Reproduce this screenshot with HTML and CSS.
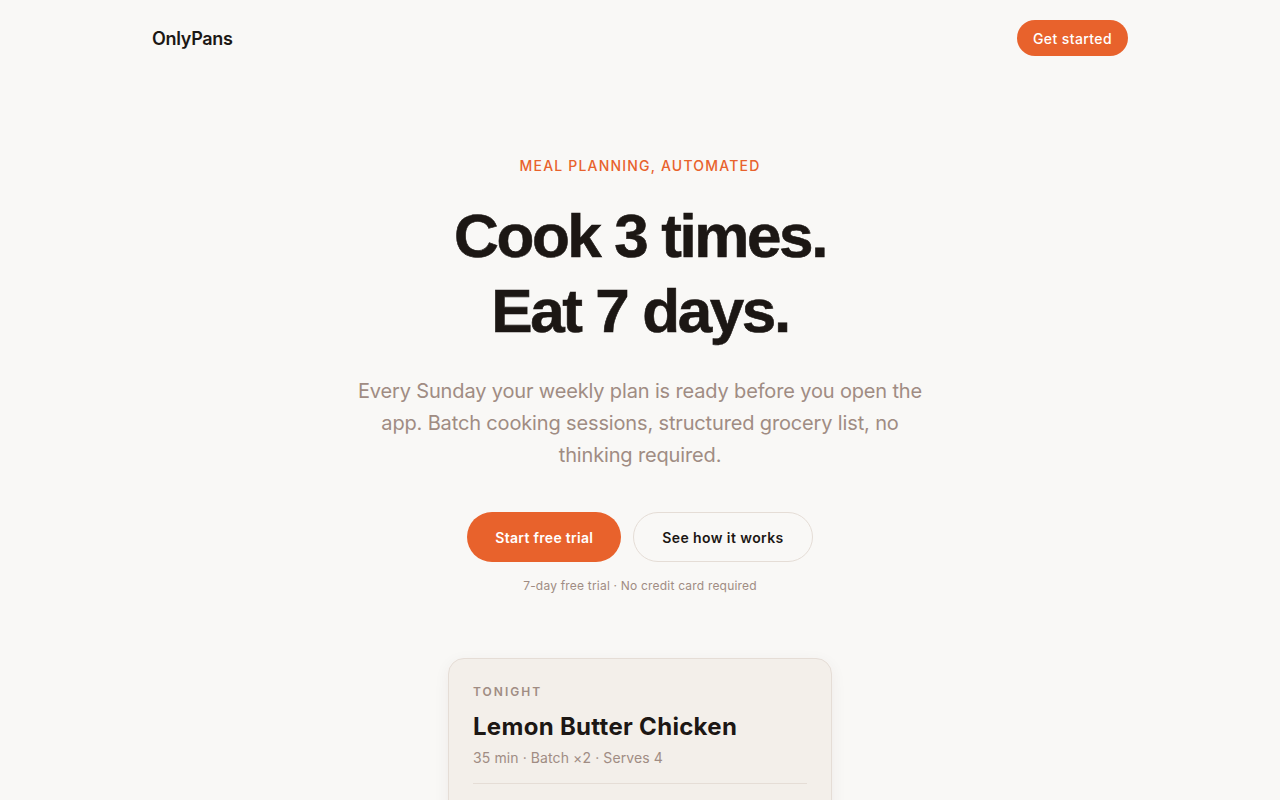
FILE: index.html
```html
<!DOCTYPE html>
<html lang="en">
<head>
    <meta charset="UTF-8">
    <meta name="viewport" content="width=device-width, initial-scale=1.0">
    <title>OnlyPans</title>
    <link rel="stylesheet" href="styles.css">
</head>
<body>
    <header class="nav">
        <div class="logo">OnlyPans</div>
        <a class="btn btn-small" href="#">Get started</a>
    </header>

    <main class="hero">
        <div class="eyebrow">MEAL PLANNING, AUTOMATED</div>
        <h1>Cook 3 times.<br>Eat 7 days.</h1>
        <p class="lead">Every Sunday your weekly plan is ready before you open the app. Batch cooking sessions, structured grocery list, no thinking required.</p>

        <div class="actions">
            <a class="btn btn-primary" href="#">Start free trial</a>
            <a class="btn btn-ghost" href="#">See how it works</a>
        </div>
        <div class="note">7-day free trial · No credit card required</div>

        <div class="card">
            <div class="card-label">TONIGHT</div>
            <div class="card-title">Lemon Butter Chicken</div>
            <div class="card-meta">35 min · Batch ×2 · Serves 4</div>
            <div class="card-divider"></div>
            <div class="card-body"></div>
        </div>
    </main>
</body>
</html>
```

FILE: styles.css
```css
* {
    margin: 0;
    padding: 0;
    box-sizing: border-box;
}

body {
    font-family: Inter, 'Noto Sans', sans-serif;
    background: #f9f8f6;
    color: #1c1714;
    min-height: 100vh;
    overflow: hidden;
}

a {
    text-decoration: none;
}

.nav {
    width: 976px;
    margin: 0 auto;
    height: 76px;
    display: flex;
    align-items: center;
    justify-content: space-between;
}

.logo {
    font-size: 18px;
    font-weight: 600;
    letter-spacing: -0.3px;
    color: #1c1714;
}

.btn {
    display: inline-flex;
    align-items: center;
    justify-content: center;
    border-radius: 999px;
    font-weight: 600;
}

.btn-small {
    height: 36px;
    padding: 0 16px;
    background: #e8622c;
    color: #fff;
    font-size: 14px;
    font-weight: 500;
    letter-spacing: 0.4px;
}

.hero {
    display: flex;
    flex-direction: column;
    align-items: center;
    text-align: center;
    padding-top: 81px;
}

.eyebrow {
    font-size: 14px;
    font-weight: 500;
    letter-spacing: 1.2px;
    color: #e8622c;
}

h1 {
    margin-top: 24px;
    font-family: 'Liberation Sans', Arial, sans-serif;
    font-size: 62px;
    line-height: 75px;
    font-weight: 700;
    letter-spacing: -2.4px;
    color: #1c1714;
    -webkit-text-stroke: 0.6px #1c1714;
}

.lead {
    margin-top: 27px;
    max-width: 580px;
    font-size: 20px;
    line-height: 32px;
    letter-spacing: -0.15px;
    color: #a08c83;
}

.actions {
    margin-top: 41px;
    display: flex;
    gap: 12px;
}

.btn-primary {
    height: 50px;
    padding: 0 28px;
    background: #e8622c;
    color: #fff;
    font-size: 14px;
    letter-spacing: 0.3px;
}

.btn-ghost {
    height: 50px;
    padding: 0 28px;
    background: transparent;
    border: 1px solid #e5ddd6;
    color: #1c1714;
    font-size: 14px;
    letter-spacing: 0.4px;
}

.note {
    margin-top: 16px;
    font-size: 12px;
    letter-spacing: 0.2px;
    color: #a08c83;
}

.card {
    margin-top: 65px;
    width: 384px;
    background: #f3efea;
    border: 1px solid #e5ddd6;
    border-radius: 16px;
    box-shadow: 0 4px 16px rgba(60, 40, 20, 0.06);
    padding: 25px 24px 0;
    text-align: left;
}

.card-label {
    font-size: 12px;
    font-weight: 600;
    letter-spacing: 2px;
    color: #a08c83;
}

.card-title {
    margin-top: 13px;
    font-size: 24px;
    font-weight: 700;
    letter-spacing: 0.3px;
    color: #1c1714;
}

.card-meta {
    margin-top: 8px;
    font-size: 14px;
    letter-spacing: 0.1px;
    color: #a08c83;
}

.card-divider {
    margin-top: 17px;
    height: 1px;
    background: #e5ddd6;
}

.card-body {
    height: 60px;
}
```
